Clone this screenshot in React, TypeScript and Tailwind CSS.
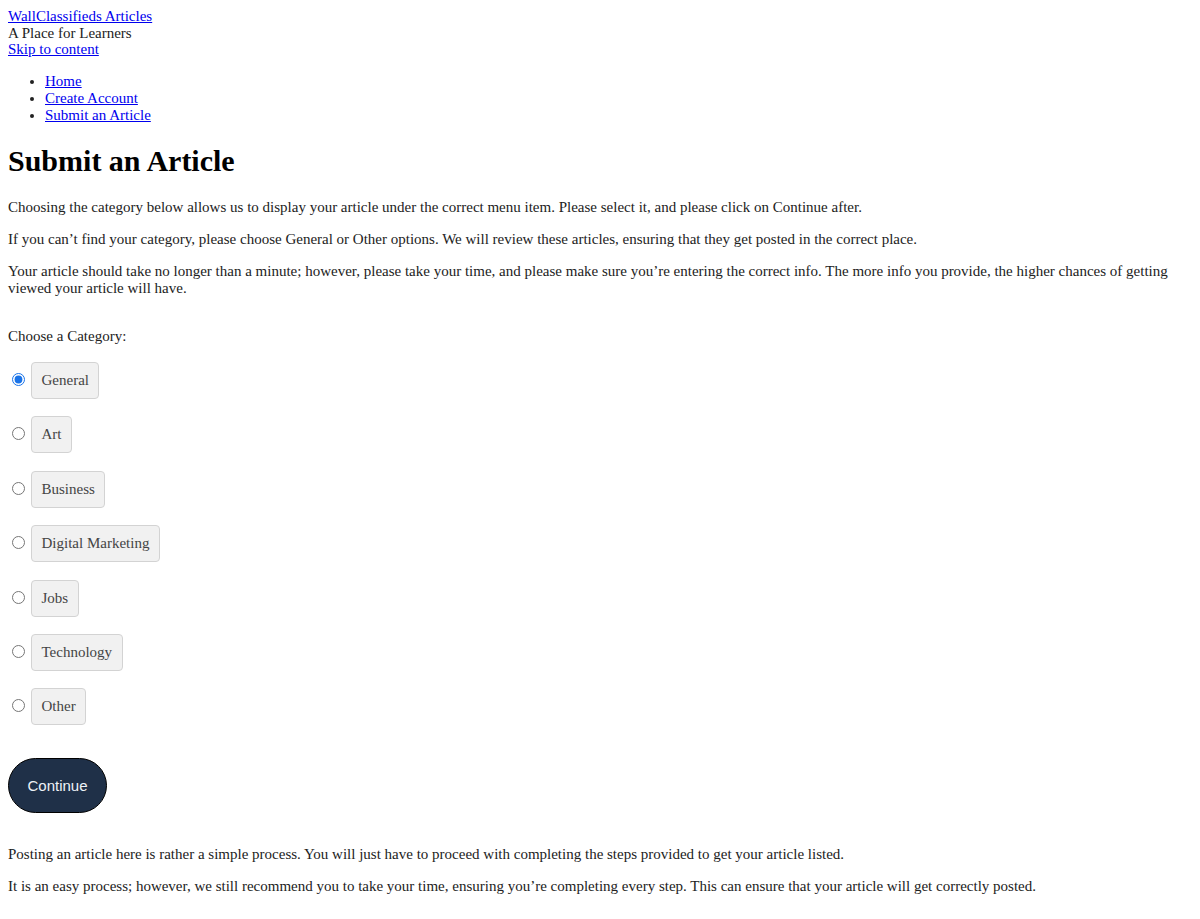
import React, { useState } from 'react';

const categories = ['General', 'Art', 'Business', 'Digital Marketing', 'Jobs', 'Technology', 'Other'];

const App: React.FC = () => {
    const [selected, setSelected] = useState('General');

    return (
        <div className="p-2 font-['Liberation_Serif',serif] text-[15px] leading-[17px] text-[#222]">
            <header className="leading-[16.5px]">
                <a href="#" className="block w-fit text-[#0000ee] underline">WallClassifieds Articles</a>
                <div>A Place for Learners</div>
                <a href="#" className="block w-fit text-[#0000ee] underline">Skip to content</a>
            </header>

            <nav>
                <ul className="mt-[15px] list-disc pl-[37px]">
                    <li><a href="#" className="text-[#0000ee] underline">Home</a></li>
                    <li><a href="#" className="text-[#0000ee] underline">Create Account</a></li>
                    <li><a href="#" className="text-[#0000ee] underline">Submit an Article</a></li>
                </ul>
            </nav>

            <h1 className="mt-[20px] text-[30px] font-bold leading-[34.5px] text-black">Submit an Article</h1>

            <div className="mt-[21px] space-y-[15px]">
                <p>Choosing the category below allows us to display your article under the correct menu item. Please select it, and please click on Continue after.</p>
                <p>If you can’t find your category, please choose General or Other options. We will review these articles, ensuring that they get posted in the correct place.</p>
                <p>Your article should take no longer than a minute; however, please take your time, and please make sure you’re entering the correct info. The more info you provide, the higher chances of getting viewed your article will have.</p>
            </div>

            <form className="mt-[31px]">
                <p>Choose a Category:</p>
                <div className="mt-[17px] flex flex-col gap-[17.4px]">
                    {categories.map(cat => (
                        <div key={cat} className="flex items-center">
                            <input
                                type="radio"
                                name="category"
                                id={cat}
                                checked={selected === cat}
                                onChange={() => setSelected(cat)}
                                className="mx-[4px] mb-[2px] h-[13px] w-[13px] accent-[#1a73e8]"
                            />
                            <label
                                htmlFor={cat}
                                className="ml-[2px] rounded-[4px] border border-[#d3d3d3] bg-[#f1f1f1] px-[9.5px] py-[9px] text-[#444]"
                            >
                                {cat}
                            </label>
                        </div>
                    ))}
                </div>
                <button
                    type="button"
                    className="mt-[33px] block h-[55px] w-[99px] rounded-full border border-black bg-[#1f3048] font-['Liberation_Sans',sans-serif] text-[15px] text-[#eef2f7]"
                >
                    Continue
                </button>
            </form>

            <div className="mt-[32.5px] space-y-[15px]">
                <p>Posting an article here is rather a simple process. You will just have to proceed with completing the steps provided to get your article listed.</p>
                <p>It is an easy process; however, we still recommend you to take your time, ensuring you’re completing every step. This can ensure that your article will get correctly posted.</p>
            </div>
        </div>
    );
};

export default App;
